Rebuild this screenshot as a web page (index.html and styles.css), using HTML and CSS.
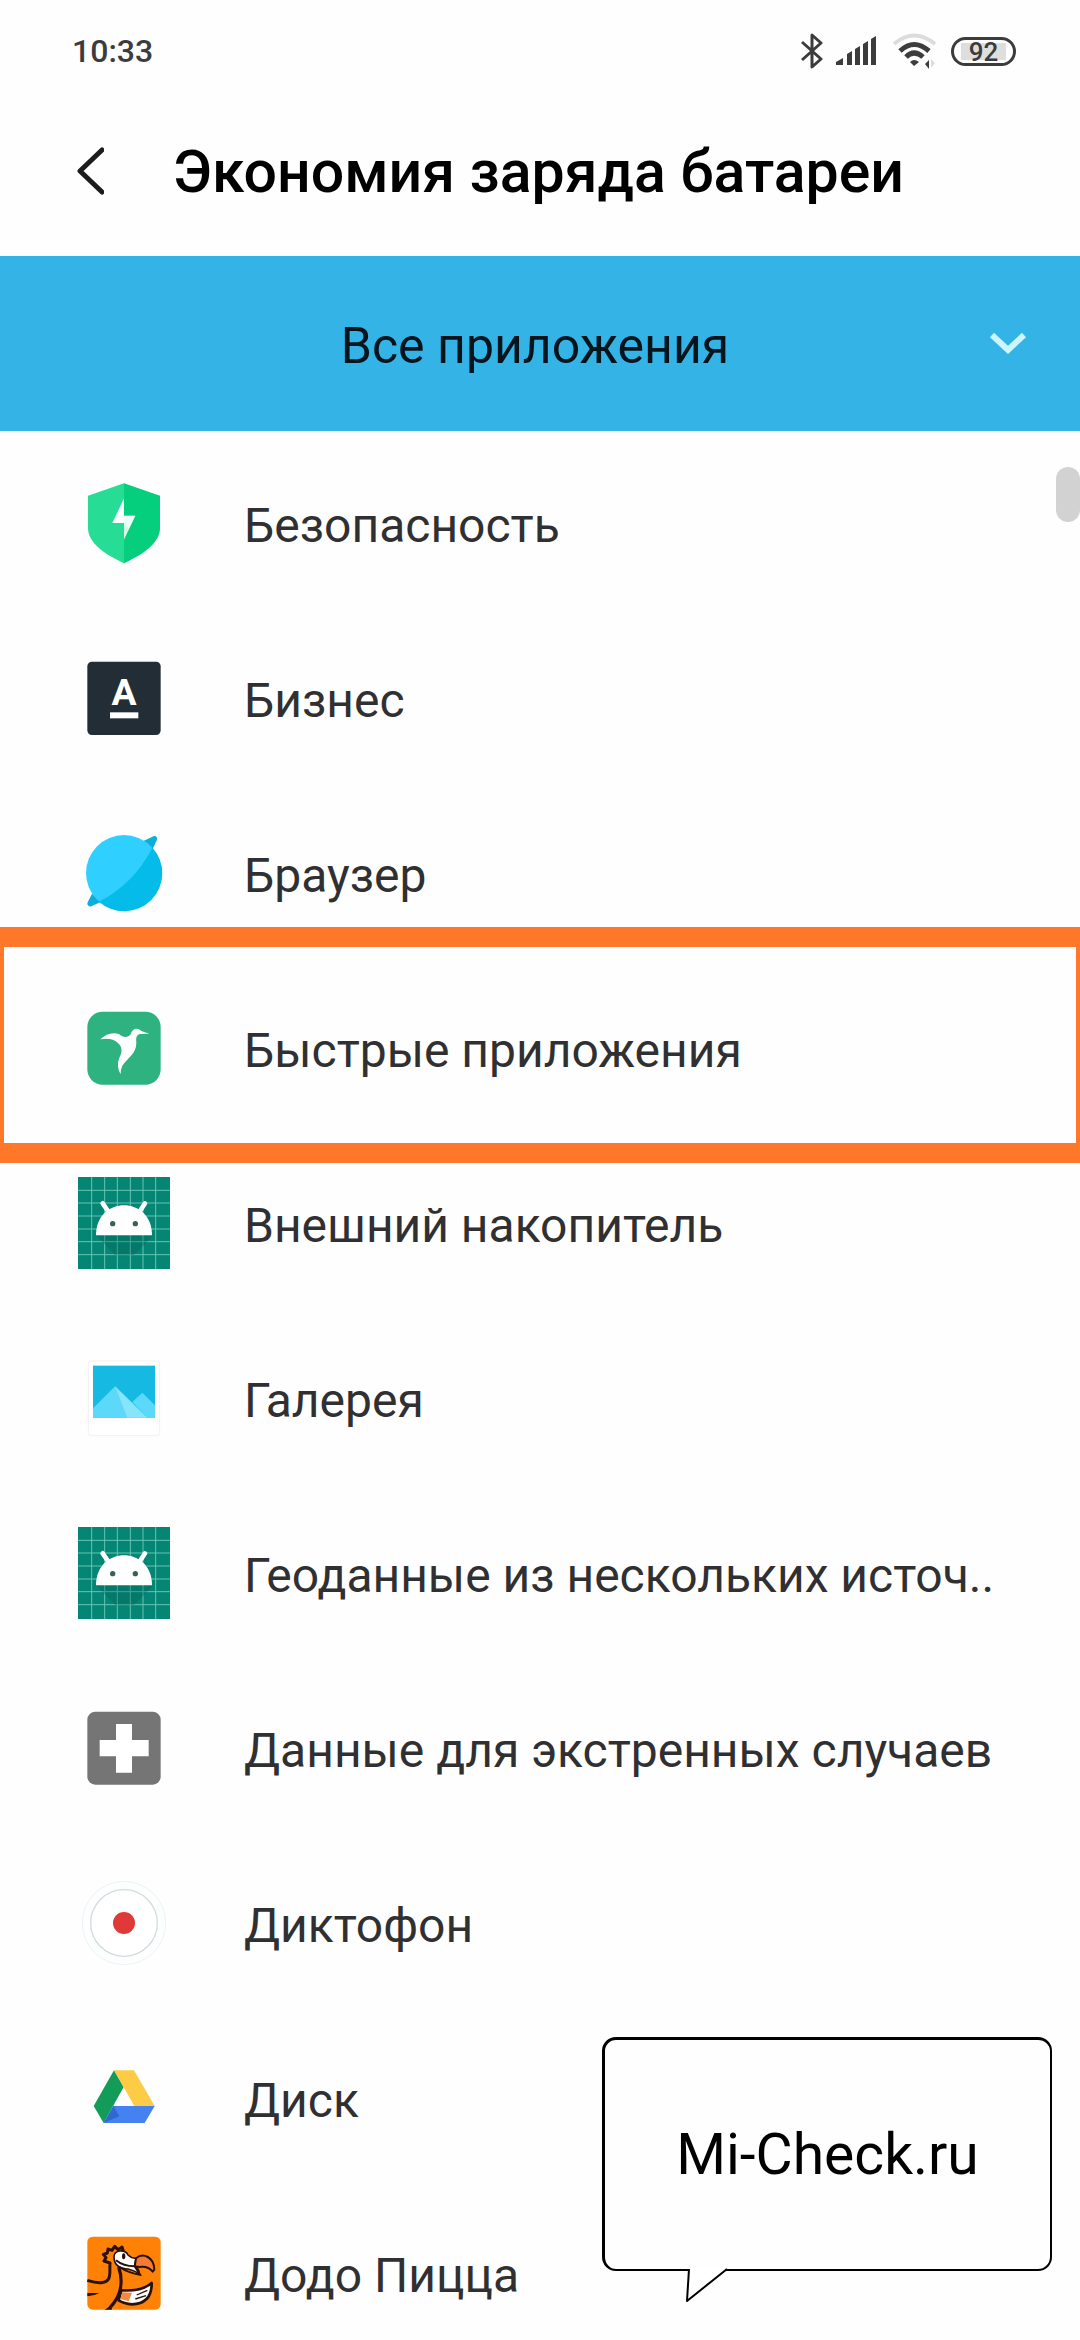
FILE: index.html
```
<!DOCTYPE html>
<html lang="ru">
<head>
  <meta charset="UTF-8">
  <meta name="viewport" content="width=device-width">
  <title>Экономия заряда батареи</title>
  <link rel="stylesheet" href="styles.css">
</head>
<body>
<div id="status">
  <span>10:33</span>
  <div class="status_icons">
    <svg class="bluetooth" width="22" height="36" viewBox="0 0 22 36">
      <path d="M1 9 L20 26 L11 34 V2 L20 10 L1 27" fill="none" stroke="#3c3c3c" stroke-width="3" stroke-linejoin="round"/>
    </svg>
    <svg class="signal" width="42" height="30" viewBox="0 0 42 30">
      <path d="M0 29 V26 L7 22 V29z M11 29 V18 L16 15 V29z M19 29 V13 L24 10 V29z M27 29 V8 L32 5 V29z M35 29 V3 L40 0 V29z" fill="#3c3c3c"/>
    </svg>
    <svg class="wifi" width="44" height="36" viewBox="0 0 44 36">
      <g fill="none" stroke-width="4">
        <path d="M1 11 Q21 -6 42 11" stroke="#dcdcdc"/>
        <path d="M7 18 Q21 5 36 18" stroke="#3c3c3c" stroke-width="5"/>
        <path d="M13 24 Q21 16 30 24" stroke="#3c3c3c" stroke-width="5"/>
      </g>
      <path d="M17 29 Q21 25 26 29 L21 33z M32 31 L36 27 V36z" fill="#3c3c3c"/>
      <path d="M38 35 V26 L42 30z" fill="#dcdcdc"/>
    </svg>
    <span class="battery"><span>92</span></span>
  </div>
</div>

<div id="header">
  <button type="button" class="back" aria-label="Назад">
    <svg width="32" height="48" viewBox="0 0 32 48">
      <path d="M30 3 L8 24 L30 45" fill="none" stroke="#1c1c1c" stroke-width="5" stroke-linecap="round" stroke-linejoin="round"/>
    </svg>
  </button>
  <h1>Экономия заряда батареи</h1>
</div>

<div id="filter">
  <select aria-label="Фильтр приложений">
    <option>Все приложения</option>
  </select>
  <svg width="40" height="28" viewBox="0 0 40 28">
    <path d="M4 5 L20 20 L36 5" fill="none" stroke="#cdf5ff" stroke-width="6"/>
  </svg>
</div>

<div id="content">
  <ul>
    <li><a href="#">
      <svg class="icon" viewBox="54 50 276 276">
        <path d="M192 69 L84 106 V204 C84 250 140 285 192 309z" fill="#27dd95"/>
        <path d="M192 69 L300 106 V204 C300 250 244 285 192 309z" fill="#05cf7c"/>
        <path d="M192 114 L157 188 H192z" fill="#fff"/>
        <path d="M192 166 H226 L192 238z" fill="#d2fbe7"/>
        <path d="M192 166 H226 L206 206 L192 188z" fill="#fff" opacity=".6"/>
      </svg>
      <span>Безопасность</span>
    </a></li>
    <li><a href="#">
      <svg class="icon" viewBox="54 575 276 276">
        <rect x="82" y="604" width="220" height="220" rx="14" fill="#222d36"/>
        <text class="logo_letter" x="192" y="734" text-anchor="middle">A</text>
        <rect x="150" y="756" width="85" height="18" fill="#fff"/>
      </svg>
      <span>Бизнес</span>
    </a></li>
    <li><a href="#">
      <svg class="icon" viewBox="54 1100 276 276">
        <path d="M250 1142 L282 1127 Q292 1126 291 1138 L278 1166z M96 1300 L82 1328 Q82 1340 94 1338 L124 1324z" fill="#0eaedb"/>
        <circle cx="192" cy="1238" r="114" fill="#2fd0ff"/>
        <path d="M277 1162 A114 114 0 0 1 117 1324 Q222 1270 277 1162z" fill="#04bbea"/>
      </svg>
      <span>Браузер</span>
    </a></li>
    <li class="marked"><a href="#">
      <svg class="icon" viewBox="54 35 276 276">
        <rect x="82" y="64" width="220" height="219" rx="46" fill="#2eb280"/>
        <path d="M121 147 C138 130 160 124 178 132 C190 143 204 142 212 132 C218 112 234 112 244 122 L268 130 L240 131 C228 134 228 144 229 158 C229 190 202 204 187 226 Q182 236 182 251 C170 232 173 210 181 196 C188 180 184 168 176 160 C160 144 142 144 121 147z" fill="#fff"/>
      </svg>
      <span>Быстрые приложения</span>
    </a></li>
    <li><a href="#">
      <svg class="icon" viewBox="54 560 276 276">
        <rect x="54" y="560" width="276" height="276" fill="#058573"/>
        <path d="M95 560V836 M134 560V836 M172 560V836 M211 560V836 M249 560V836 M287 560V836 M54 600H330 M54 638H330 M54 677H330 M54 716H330 M54 754H330 M54 793H330" stroke="#67c4b5" stroke-width="3"/>
        <path d="M108 735 H276 V740 L222 794 H165z" fill="#04655a" opacity=".35"/>
        <path d="M108 735 C108 615 276 615 276 735z" fill="#fff"/>
        <path d="M128 639 L146 665 M255 639 L238 665" stroke="#fff" stroke-width="14" stroke-linecap="round"/>
        <circle cx="158" cy="700" r="8" fill="#3d5f5a"/>
        <circle cx="226" cy="700" r="8" fill="#3d5f5a"/>
      </svg>
      <span>Внешний накопитель</span>
    </a></li>
    <li><a href="#">
      <svg class="icon" viewBox="54 35 276 276">
        <rect x="85" y="62" width="214" height="224" rx="9" fill="#fff" stroke="#f1f1f1" stroke-width="3"/>
        <rect x="99" y="76" width="186" height="156" fill="#15b9e2"/>
        <path d="M99 204 L165 138 L262 232 H99z" fill="#5cd8f8"/>
        <path d="M217 185 L247 157 L285 195 V232 H262z" fill="#5cd8f8"/>
        <path d="M165 138 L262 232 H202z" fill="#86e4fb"/>
      </svg>
      <span>Галерея</span>
    </a></li>
    <li><a href="#">
      <svg class="icon" viewBox="54 560 276 276">
        <rect x="54" y="560" width="276" height="276" fill="#058573"/>
        <path d="M95 560V836 M134 560V836 M172 560V836 M211 560V836 M249 560V836 M287 560V836 M54 600H330 M54 638H330 M54 677H330 M54 716H330 M54 754H330 M54 793H330" stroke="#67c4b5" stroke-width="3"/>
        <path d="M108 735 H276 V740 L222 794 H165z" fill="#04655a" opacity=".35"/>
        <path d="M108 735 C108 615 276 615 276 735z" fill="#fff"/>
        <path d="M128 639 L146 665 M255 639 L238 665" stroke="#fff" stroke-width="14" stroke-linecap="round"/>
        <circle cx="158" cy="700" r="8" fill="#3d5f5a"/>
        <circle cx="226" cy="700" r="8" fill="#3d5f5a"/>
      </svg>
      <span>Геоданные из нескольких источ..</span>
    </a></li>
    <li><a href="#">
      <svg class="icon" viewBox="54 35 276 276">
        <rect x="82" y="64" width="220" height="219" rx="24" fill="#757575"/>
        <path d="M168 101 H216 V149 H266 V198 H216 V247 H168 V198 H119 V149 H168z" fill="#fff"/>
      </svg>
      <span>Данные для экстренных случаев</span>
    </a></li>
    <li><a href="#">
      <svg class="icon" viewBox="54 560 276 276">
        <circle cx="192" cy="698" r="125" fill="#fdfefe" stroke="#ebf3f5" stroke-width="3"/>
        <circle cx="192" cy="698" r="100" fill="#fff" stroke="#d3dbde" stroke-width="4"/>
        <circle cx="192" cy="698" r="33" fill="#e03a38"/>
      </svg>
      <span>Диктофон</span>
    </a></li>
    <li><a href="#">
      <svg class="icon" viewBox="54 35 276 276">
        <path d="M162 90 L191 140 L131 248 L101 197z" fill="#139c58"/>
        <path d="M162 90 H222 L284 197 H223z" fill="#fdcb44"/>
        <path d="M160 197 H284 L254 248 H131z" fill="#4382f0"/>
        <path d="M160 197 L178 228 L131 248z" fill="#3267d2"/>
      </svg>
      <span>Диск</span>
    </a></li>
    <li><a href="#">
      <svg class="icon" viewBox="54 560 276 276">
        <rect x="82" y="589" width="220" height="219" rx="16" fill="#ff8206"/>
        <path d="M82 720 Q140 738 148 710 C152 690 148 682 150 668 L132 662 L138 652 L130 642 L142 638 L144 626 L156 630 L164 618 L174 628 L186 620 L190 632" fill="none" stroke="#2a110b" stroke-width="9" stroke-linejoin="round"/>
        <path d="M162 650 C162 628 196 626 204 644 Q214 654 228 654 L224 678 Q236 682 238 700 Q222 690 204 686 C180 686 162 674 162 650z" fill="#fff" stroke="#2a110b" stroke-width="5"/>
        <path d="M228 654 C250 636 282 650 283 688 L278 694 Q264 676 238 680 L224 678z" fill="#f47a35" stroke="#2a110b" stroke-width="6" stroke-linejoin="round"/>
        <path d="M168 660 Q190 678 224 678 L240 703 Q206 698 178 680" fill="none" stroke="#2a110b" stroke-width="6"/>
        <ellipse cx="191" cy="648" rx="5" ry="9" fill="#2a110b"/>
        <path d="M176 680 C192 728 180 772 148 804" fill="none" stroke="#2a110b" stroke-width="10"/>
        <path d="M184 750 Q244 754 275 728 Q276 790 216 792 Q192 790 176 780z" fill="#fff" stroke="#2a110b" stroke-width="8" stroke-linejoin="round"/>
        <path d="M187 756 L216 757 L206 783 L181 776z" fill="#f08a42"/>
        <path d="M262 750 L230 764 M258 766 L226 776" stroke="#2a110b" stroke-width="4"/>
        <path d="M82 758 L118 758 Q100 768 82 768z M134 808 L152 796 L156 808z" fill="#2a110b"/>
      </svg>
      <span>Додо Пицца</span>
    </a></li>
  </ul>
  <div class="scroll_thumb"></div>
</div>

<div id="callout">
  Mi-Check.ru
  <svg class="tail" width="44" height="36" viewBox="0 0 44 36">
    <path d="M5 0 L4 2 L2 34 L42 2 V0z" fill="#fff"/>
    <path d="M4 2 L2 34 L42 2" fill="none" stroke="#000" stroke-width="2" stroke-linejoin="round"/>
  </svg>
</div>
</body>
</html>
```
FILE: styles.css
```
* {
  margin: 0;
  padding: 0;
  box-sizing: border-box;
}

body {
  position: relative;
  display: flex;
  flex-direction: column;
  height: 100vh;
  overflow: hidden;
  background-color: #fefefe;
  font-family: Roboto, "Noto Sans", sans-serif;
  font-size: 48px;
  color: #303032;
}

#status {
  display: flex;
  flex-shrink: 0;
  align-items: center;
  justify-content: space-between;
  height: 102px;
  padding: 0 64px 0 72px;
  font-size: 32px;
  font-weight: 500;
  color: #3c3c3c;
}

.status_icons {
  display: flex;
  align-items: center;
}

.signal {
  margin: 0 15px 0 13px;
}

.battery {
  display: flex;
  width: 65px;
  height: 29px;
  margin-left: 14px;
  padding: 3px 7px;
  border: 3px solid #3c3c3c;
  border-radius: 15px;
  font-size: 26px;
  line-height: 18px;
}

.battery span {
  flex: 1;
  background-color: #dedede;
  text-align: center;
}

#header {
  display: flex;
  flex-shrink: 0;
  align-items: center;
  height: 154px;
  padding: 0 72px 16px;
}

.back {
  display: flex;
  width: 101px;
  border: 0;
  background: none;
}

h1 {
  font-size: 59px;
  font-weight: 500;
  white-space: nowrap;
  color: #000;
}

#filter {
  display: grid;
  flex-shrink: 0;
  align-items: center;
  height: 175px;
  background-color: #34b4e6;
}

#filter select, #filter svg {
  grid-area: 1 / 1;
}

#filter select {
  width: 100%;
  height: 100%;
  padding: 4px 10px 0 0;
  border: 0;
  background: none;
  appearance: none;
  font: inherit;
  font-size: 50px;
  text-align: center;
  text-align-last: center;
  color: #06141c;
}

#filter svg {
  justify-self: end;
  margin-right: 52px;
  pointer-events: none;
}

#content {
  position: relative;
  flex: 1;
  min-height: 0;
  padding-top: 4px;
  overflow: hidden;
}

#content ul {
  list-style: none;
}

#content li {
  position: relative;
}

#content li a {
  display: flex;
  align-items: center;
  height: 175px;
  padding-left: 78px;
  text-decoration: none;
  white-space: nowrap;
  color: inherit;
}

#content li span {
  padding-top: 6px;
}

.icon {
  flex-shrink: 0;
  width: 92px;
  height: 92px;
  margin-right: 74px;
}

.logo_letter {
  font-size: 112px;
  font-weight: 700;
  fill: #fff;
}

.marked:after {
  content: "";
  position: absolute;
  top: -33px;
  right: 0;
  bottom: -28px;
  left: 0;
  border: solid #ff7729;
  border-width: 20px 4px;
  pointer-events: none;
}

.scroll_thumb {
  position: absolute;
  top: 36px;
  right: 0;
  width: 24px;
  height: 55px;
  border-radius: 12px;
  background-color: #d2d2d2;
}

#callout {
  position: absolute;
  right: 28px;
  bottom: 69px;
  width: 450px;
  height: 234px;
  border: solid #000;
  border-width: 3px 2px 2px 3px;
  border-radius: 14px;
  background-color: #fefefe;
  font-size: 57px;
  line-height: 229px;
  text-align: center;
  color: #000;
}

.tail {
  position: absolute;
  top: 227px;
  left: 80px;
}
```
